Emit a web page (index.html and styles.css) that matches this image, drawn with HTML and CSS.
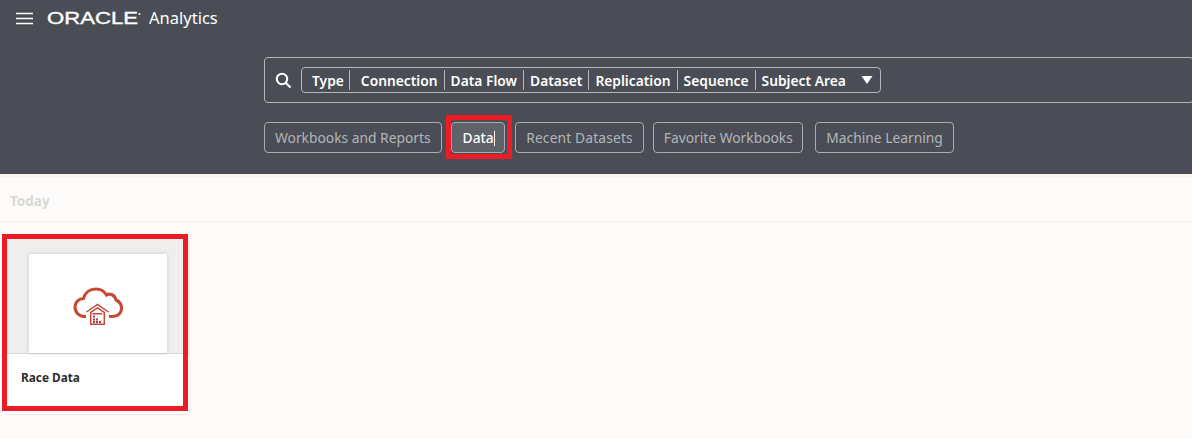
FILE: index.html
```html
<!DOCTYPE html>
<html lang="en">

<head>
    <meta charset="UTF-8">
    <meta name="viewport" content="width=device-width, initial-scale=1.0">
    <title>Oracle Analytics</title>
    <link rel="stylesheet" href="styles.css">
</head>

<body>
    <header class="header">
        <div class="topbar">
            <svg class="burger" width="18" height="13" viewBox="0 0 18 13">
                <path d="M0 1.5h17M0 6.5h17M0 11.5h17" stroke="#fff" stroke-width="1.7" fill="none" />
            </svg>
            <svg class="logo" width="96" height="16" viewBox="0 0 96 16">
                <text x="0" y="14" textLength="91" lengthAdjust="spacingAndGlyphs" class="logo-text">ORACLE</text>
                <circle cx="92.500" cy="4" r="1" fill="#fff" />
            </svg>
            <span class="product">Analytics</span>
        </div>

        <div class="searchbox">
            <svg class="search-icon" width="17" height="17" viewBox="0 0 17 17">
                <circle cx="7" cy="7" r="5.200" stroke="#fff" stroke-width="2" fill="none" />
                <path d="M11 11l4.500 4.500" stroke="#fff" stroke-width="2.200" fill="none" />
            </svg>
            <div class="chips">
                <span class="chip chip-type">Type</span>
                <span class="chip chip-conn">Connection</span>
                <span class="chip">Data Flow</span>
                <span class="chip">Dataset</span>
                <span class="chip">Replication</span>
                <span class="chip">Sequence</span>
                <span class="chip chip-last">Subject Area</span>
                <svg class="caret" width="12" height="8" viewBox="0 0 12 8">
                    <path d="M0.500 0h11L6 8z" fill="#fff" />
                </svg>
            </div>
        </div>

        <div class="filters">
            <button class="pill">Workbooks and Reports</button>
            <button class="pill pill-active">Data<span class="cursor"></span></button>
            <button class="pill pill-recent">Recent Datasets</button>
            <button class="pill pill-favorite">Favorite Workbooks</button>
            <button class="pill">Machine Learning</button>
        </div>
        <div class="mark mark-data"></div>
    </header>

    <main class="content">
        <div class="section-title">Today</div>
        <div class="card">
            <div class="card-top">
                <div class="card-thumb">
                    <svg class="card-icon" width="50" height="39" viewBox="0 0 50 39">
                        <path d="M13 29.500H12C6 29.500 2 25.500 2 20C2 15 6 11.500 10.500 11.500C12 5.500 17 2 23 2C28 2 31.500 4.500 33.500 8C35 7 37 7 38.500 7.500C41 8.500 42.500 10.500 43 13C46.500 14.500 48.500 17.500 48.500 21C48.500 26 45 29.500 39 29.500H36" fill="none" stroke="#c74634" stroke-width="3" />
                        <path d="M13.500 25L24.500 17.500L35.500 25" fill="none" stroke="#c74634" stroke-width="1.500" />
                        <path d="M17.700 37.300V25.500L24.500 20.800L31.300 25.500V37.300z" fill="#fff" stroke="#c74634" stroke-width="1.500" />
                        <path d="M19.500 26h10v1.500h-10z" fill="#c74634" />
                        <path d="M20 28.500h2v2h-2zM20 31.500h2v2h-2zM20 34h2v2h-2zM23 31.500h2v2h-2zM23 34h2v2h-2zM26 34h2v2h-2z" fill="#b8344a" />
                    </svg>
                </div>
            </div>
            <div class="card-label">Race Data</div>
        </div>
        <div class="mark mark-card"></div>
    </main>
</body>

</html>
```

FILE: styles.css
```css
/* Page */
html,
body {
    margin: 0;
    padding: 0;
    height: 100%;
    overflow: hidden;
}

body {
    font-family: "Noto Sans", "Open Sans", Arial, sans-serif;
    background-color: #fcfbf9;
}

/* Header */
.header {
    position: relative;
    height: 174px;
    box-sizing: border-box;
    background-color: #4a4d55;
    box-shadow: 0 3px 0 #fbf3e8;
    padding-left: 264px;
}

.topbar {
    display: flex;
    align-items: center;
    height: 36px;
    margin-left: -264px;
    padding-left: 16px;
}

.burger {
    margin-right: 13px;
}

.logo {
    margin-right: 6px;
}

.logo-text {
    font-family: "Liberation Sans", Arial, sans-serif;
    font-size: 16px;
    fill: #fff;
    stroke: #fff;
    stroke-width: 0.35px;
}

.product {
    color: #fff;
    font-size: 16.500px;
    padding-bottom: 2px;
}

/* Search */
.searchbox {
    display: flex;
    align-items: center;
    height: 46px;
    margin-top: 21px;
    margin-right: -2px;
    padding-left: 10px;
    box-sizing: border-box;
    border: 1px solid #b5b6ba;
    border-radius: 4px;
}

.search-icon {
    margin-right: 9px;
}

.chips {
    display: flex;
    align-items: center;
    height: 26px;
    box-sizing: border-box;
    border: 1px solid #b5b6ba;
    border-radius: 4px;
    padding-left: 4px;
}

.chip {
    color: #fff;
    font-size: 13.800px;
    font-weight: 600;
    line-height: 18px;
    padding: 2px 6px 0;
    border-right: 1px solid #b5b6ba;
}

.chip-type {
    padding: 2px 5px 0 6px;
}

.chip-conn {
    padding: 2px 6px 0 11px;
}

.chip-last {
    border-right: 0;
    padding-right: 15px;
}

.caret {
    margin-right: 7px;
}

/* Filter pills */
.filters {
    display: flex;
    gap: 10px;
    margin-top: 19px;
}

.pill {
    height: 31px;
    padding: 0 10px;
    font-family: inherit;
    font-size: 13.800px;
    color: #b4b5b8;
    background-color: transparent;
    border: 1px solid #a9abaf;
    border-radius: 4px;
}

.pill:first-child {
    margin-right: -1px;
}

.pill-active {
    padding: 0 9px 0 11px;
    color: #fff;
    font-weight: 500;
    background-color: #5f6268;
}

.pill-recent {
    padding: 0 10.500px;
    margin-right: -1px;
    letter-spacing: 0.15px;
}

.pill-favorite {
    padding: 0 9.500px;
    margin-right: 2px;
}

.cursor {
    display: inline-block;
    width: 1px;
    height: 15px;
    background-color: #fff;
    vertical-align: -3px;
}

/* Red call-outs drawn over the shot */
.mark {
    position: absolute;
    box-sizing: border-box;
    border: 5px solid #ed1c24;
}

.mark-data {
    left: 446px;
    top: 115px;
    width: 66px;
    height: 44px;
}

.mark-card {
    left: 2px;
    top: 234px;
    width: 186px;
    height: 177px;
}

/* Content */
.content {
    padding-top: 3px;
}

.section-title {
    height: 44px;
    line-height: 48px;
    padding-left: 10px;
    font-size: 13.500px;
    font-weight: 700;
    color: #d9d8d6;
    border-bottom: 1px solid #f2f1ef;
}

.card {
    width: 184px;
    height: 176px;
    margin: 16px 0 0 5px;
    background-color: #fff;
    border-radius: 4px;
    box-shadow: 0 0 2px rgba(0, 0, 0, 0.2);
}

.card-top {
    display: flex;
    justify-content: center;
    height: 116px;
    box-sizing: border-box;
    padding: 16px 22px 0 24px;
    background-color: #efeeec;
    border-bottom: 1px solid #d9d8d6;
}

.card-thumb {
    display: flex;
    align-items: flex-start;
    justify-content: center;
    width: 138px;
    background-color: #fff;
    box-shadow: 0 0 4px rgba(0, 0, 0, 0.15);
}

.card-icon {
    margin-top: 33px;
}

.card-label {
    padding: 15px 0 0 16px;
    font-size: 11.800px;
    font-weight: 700;
    color: #312d2a;
}
```
